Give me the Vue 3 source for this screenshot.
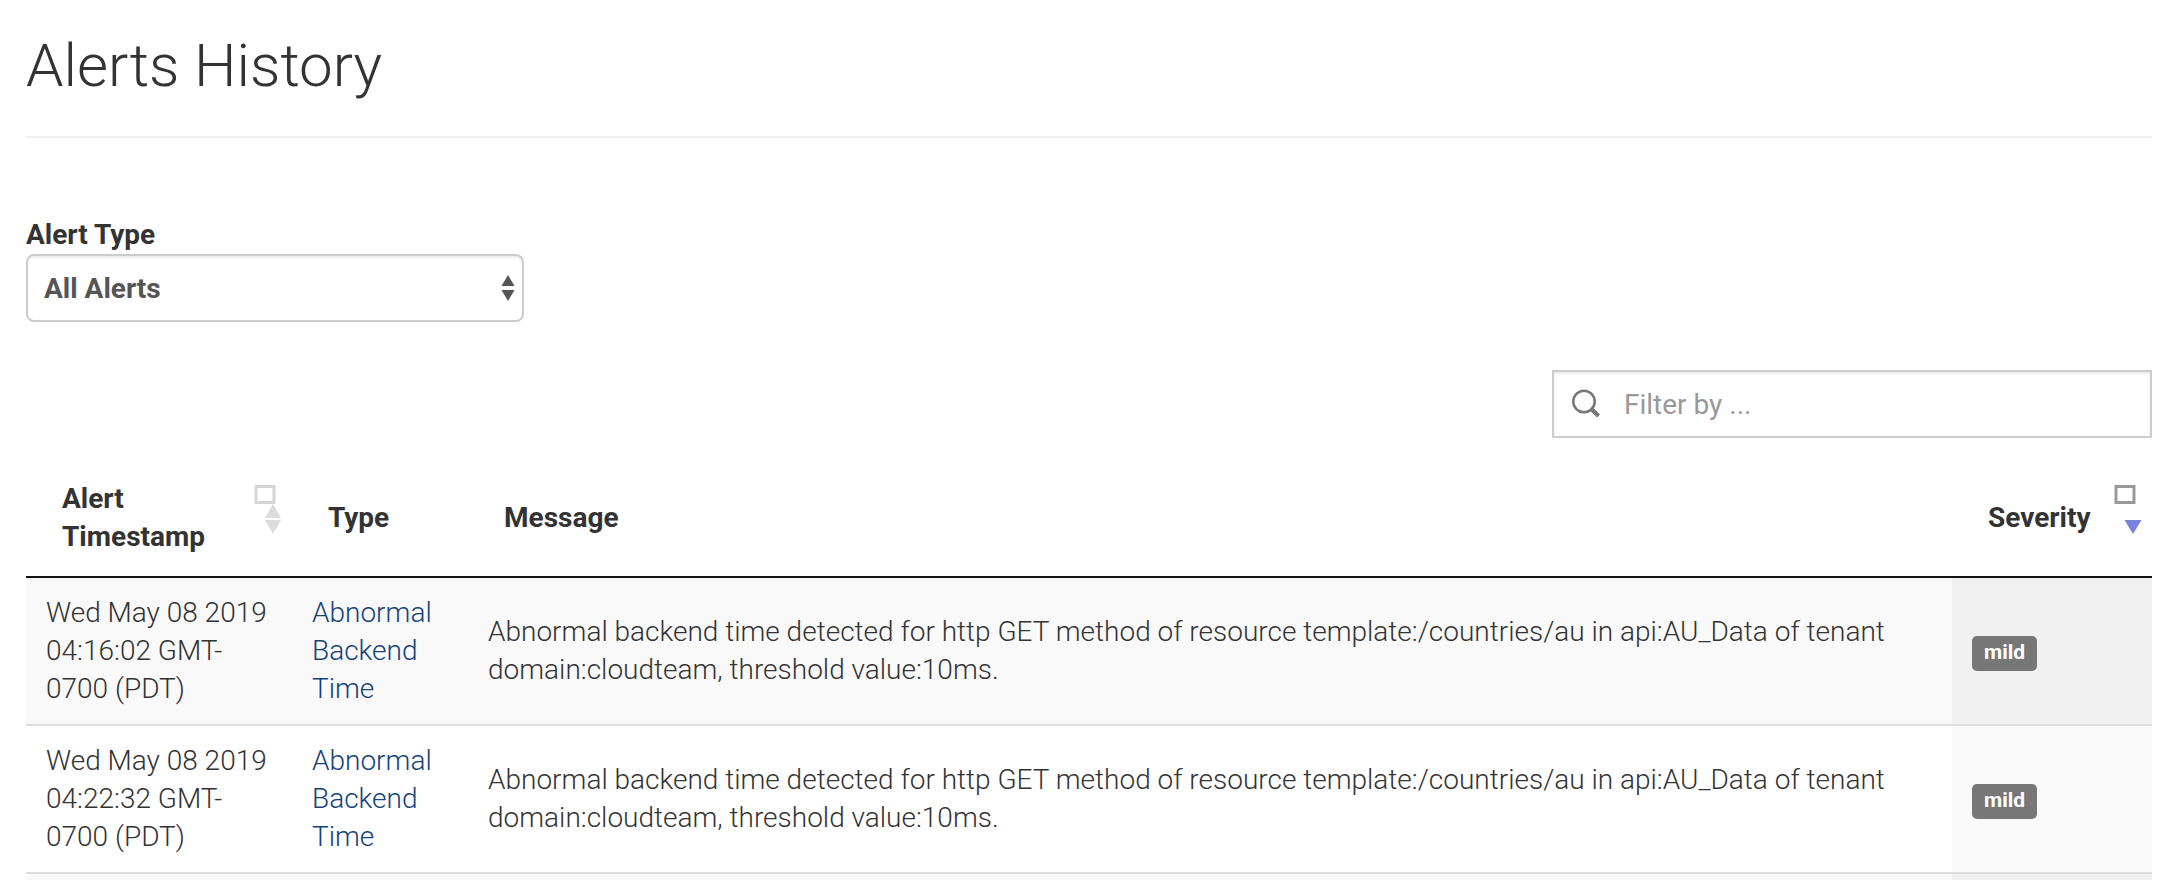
<script setup>
import { ref } from 'vue'

const alertType = ref('all')
const filter = ref('')
const message =
  'Abnormal backend time detected for http GET method of resource template:/countries/au in api:AU_Data of tenant domain:cloudteam, threshold value:10ms.'
const alerts = [
  { time: 'Wed May 08 2019 04:16:02 GMT-0700 (PDT)', type: 'Abnormal Backend Time', message, severity: 'mild' },
  { time: 'Wed May 08 2019 04:22:32 GMT-0700 (PDT)', type: 'Abnormal Backend Time', message, severity: 'mild' },
]
</script>

<template>
  <main class="page">
    <h1 class="title">Alerts History</h1>

    <div class="field">
      <label class="label" for="alert-type">Alert Type</label>
      <div class="select-wrap">
        <select id="alert-type" v-model="alertType" class="select">
          <option value="all">All Alerts</option>
        </select>
        <svg class="select-arrows" width="14" height="28" viewBox="0 0 14 28" aria-hidden="true">
          <path d="M7 1 13.5 12H.5zM.5 16h13L7 27z" fill="#555" />
        </svg>
      </div>
    </div>

    <div class="filter">
      <svg class="search-icon" width="32" height="32" viewBox="0 0 32 32" aria-hidden="true">
        <circle cx="14" cy="13.5" r="10.7" fill="none" stroke="#777" stroke-width="2.5" />
        <path d="M21 20.5 28.5 28" stroke="#777" stroke-width="4.2" />
      </svg>
      <input v-model="filter" class="filter-input" type="text" placeholder="Filter by ..." aria-label="Filter by" />
    </div>

    <table class="table">
      <colgroup>
        <col class="col-time" />
        <col class="col-type" />
        <col />
        <col class="col-severity" />
      </colgroup>
      <thead>
        <tr>
          <th>
            <div class="head">
              <span>Alert Timestamp</span>
              <button class="sort" type="button" aria-label="Sort by alert timestamp">
                <svg width="28" height="68" viewBox="0 0 28 68">
                  <rect x="2" y="2.5" width="18" height="16" fill="none" stroke="#d5d5d5" stroke-width="3" />
                  <path d="M19 20 27 34H11zM11 36h16l-8 14z" fill="#dcdcdc" />
                </svg>
              </button>
            </div>
          </th>
          <th>Type</th>
          <th>Message</th>
          <th>
            <div class="head">
              <span>Severity</span>
              <button class="sort" type="button" aria-label="Sort by severity">
                <svg width="28" height="68" viewBox="0 0 28 68">
                  <rect x="2" y="2.5" width="18" height="16" fill="none" stroke="#999" stroke-width="3" />
                  <path d="M10.5 36h17L19 50z" fill="#7b80dc" />
                </svg>
              </button>
            </div>
          </th>
        </tr>
      </thead>
      <tbody>
        <tr v-for="alert in alerts" :key="alert.time">
          <td>{{ alert.time }}</td>
          <td><a class="link" href="#">{{ alert.type }}</a></td>
          <td>{{ alert.message }}</td>
          <td><span class="badge">{{ alert.severity }}</span></td>
        </tr>
        <tr class="stub">
          <td></td>
          <td></td>
          <td></td>
          <td></td>
        </tr>
      </tbody>
    </table>
  </main>
</template>

<style>
body {
  background: #fff;
}
</style>

<style scoped>
.page {
  box-sizing: border-box;
  padding: 32px 22px 0 26px;
  color: #333;
  font-family: Roboto, 'Liberation Sans', sans-serif;
  font-size: 28px;
  line-height: 38px;
}

.title {
  margin: 0 0 78px;
  padding-bottom: 36px;
  border-bottom: 2px solid #eee;
  font-size: 60px;
  font-weight: 300;
  line-height: 68px;
}

.field {
  display: flex;
  flex-direction: column;
  align-items: flex-start;
  margin-bottom: 48px;
}

.label {
  font-weight: 700;
}

.select-wrap {
  position: relative;
  width: 498px;
  max-width: 100%;
}

.select {
  appearance: none;
  display: block;
  box-sizing: border-box;
  width: 100%;
  height: 68px;
  padding: 2px 40px 0 16px;
  border: 2px solid #ccc;
  border-radius: 8px;
  background: #fff;
  box-shadow: inset 0 2px 2px rgba(0, 0, 0, 0.075);
  color: #555;
  font: inherit;
  font-weight: 700;
}

.select-arrows {
  position: absolute;
  top: 20px;
  right: 9px;
  pointer-events: none;
}

.filter {
  display: flex;
  align-items: center;
  gap: 22px;
  box-sizing: border-box;
  width: 600px;
  max-width: 100%;
  height: 68px;
  margin: 0 0 22px auto;
  padding: 0 16px;
  border: 2px solid #ccc;
  box-shadow: inset 0 2px 2px rgba(0, 0, 0, 0.075);
}

.search-icon {
  flex: none;
}

.filter-input {
  flex: 1;
  min-width: 0;
  padding: 2px 0 0;
  border: 0;
  outline: 0;
  background: transparent;
  color: #555;
  font: inherit;
}

.filter-input::placeholder {
  color: #999;
  opacity: 1;
}

.table {
  width: 100%;
  border-collapse: separate;
  border-spacing: 0;
  table-layout: fixed;
}

.col-time {
  width: 266px;
}

.col-type {
  width: 176px;
}

.col-severity {
  width: 200px;
}

th {
  padding: 20px 10px 20px 36px;
  border-bottom: 2px solid #111;
  font-weight: 700;
  text-align: left;
  vertical-align: middle;
}

.head {
  display: flex;
  align-items: center;
  justify-content: space-between;
}

.sort {
  display: flex;
  flex: none;
  padding: 0;
  border: 0;
  background: none;
  cursor: pointer;
}

td {
  padding: 16px 20px;
  border-bottom: 2px solid #ddd;
  font-weight: 300;
  vertical-align: middle;
}

tbody tr:nth-child(odd) {
  background: #f9f9f9;
}

tbody td:last-child {
  background: #f9f9f9;
}

tbody tr:nth-child(odd) td:last-child {
  background: #f0f0f0;
}

.stub td {
  height: 6px;
  padding: 0;
  border: 0;
}

.link {
  color: #14427a;
  text-decoration: none;
}

.badge {
  padding: 4px 12px 7px;
  border-radius: 5px;
  background: #777;
  color: #fff;
  font-size: 21px;
  font-weight: 700;
}
</style>
